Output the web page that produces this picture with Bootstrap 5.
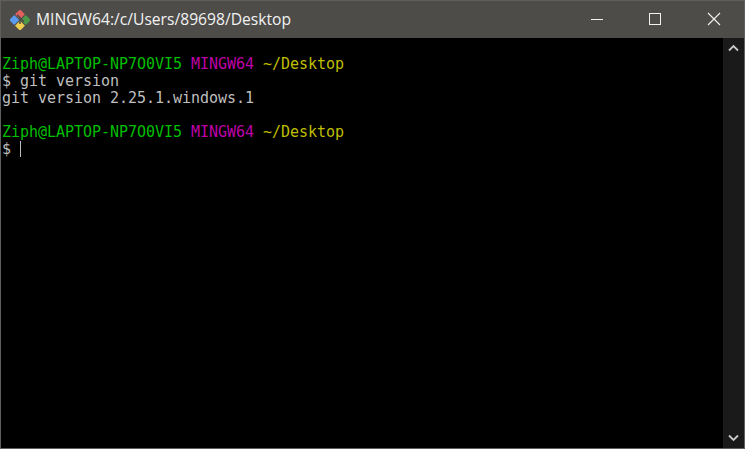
<!DOCTYPE html>
<html lang="en">
<head>
<meta charset="utf-8">
<title>MINGW64</title>
<link href="https://cdn.jsdelivr.net/npm/bootstrap@5.3.0/dist/css/bootstrap.min.css" rel="stylesheet">
<style>
html, body { height: 100%; margin: 0; background: #000; overflow: hidden; }
.term-window { height: 449px; border: 1px solid #5f5f5d; background: #000; }
.term-title { height: 37px; background: #4d4c49; color: #f2f2f2; font: 15.65px/1 "Open Sans", sans-serif; }
.term-logo { margin-left: 9px; margin-right: 6px; }
.term-controls { margin-right: 1px; }
.term-ctl { width: 58.5px; height: 37px; padding-bottom: 2px; }
.term-body { min-height: 0; }
.term-text { font: 15px/17px "DejaVu Sans Mono", monospace; letter-spacing: -0.03px; color: #bfbfbf; padding: 1px 0 0 1px; margin: 0; white-space: pre; overflow: hidden; }
.t-green { color: #00bf00; }
.t-mag { color: #bf00a8; }
.t-yel { color: #bfbf00; }
.term-cursor { display: inline-block; width: 1px; height: 16px; background: #bfbfbf; vertical-align: -3px; }
.term-scroll { width: 21px; background: #1a1a1a; padding: 6px 0; }
</style>
</head>
<body>
<div class="term-window d-flex flex-column">
  <div class="term-title d-flex align-items-center flex-shrink-0">
    <svg class="term-logo" width="20" height="20" viewBox="0 0 18 18">
      <g transform="rotate(45 9 9)">
        <rect x="2.2" y="2.2" width="6.3" height="6.3" fill="#e0605f"/>
        <rect x="9.5" y="2.2" width="6.3" height="6.3" fill="#4c9a4a"/>
        <rect x="2.2" y="9.5" width="6.3" height="6.3" fill="#5b9bf0"/>
        <rect x="9.5" y="9.5" width="6.3" height="6.3" fill="#f0cf50"/>
      </g>
      <path d="M6.5 4.5 L12.5 10.5" stroke="#4d4c49" stroke-width="1.4" fill="none"/>
      <path d="M9 7.5V12.5" stroke="#4d4c49" stroke-width="1.4" fill="none"/>
    </svg>
    <span class="flex-grow-1">MINGW64:/c/Users/89698/Desktop</span>
    <div class="term-controls d-flex">
      <div class="term-ctl d-flex align-items-center justify-content-center">
        <svg width="14" height="14" viewBox="0 0 14 14"><path d="M1 7.5H13" stroke="#f2f2f2" stroke-width="1"/></svg>
      </div>
      <div class="term-ctl d-flex align-items-center justify-content-center">
        <svg width="14" height="14" viewBox="0 0 14 14"><rect x="1.5" y="1.5" width="11" height="11" fill="none" stroke="#f2f2f2" stroke-width="1"/></svg>
      </div>
      <div class="term-ctl d-flex align-items-center justify-content-center">
        <svg width="14" height="14" viewBox="0 0 14 14"><path d="M1 1L13 13M13 1L1 13" stroke="#f2f2f2" stroke-width="1.1"/></svg>
      </div>
    </div>
  </div>
  <div class="term-body d-flex flex-grow-1">
    <pre class="term-text flex-grow-1">

<span class="t-green">Ziph@LAPTOP-NP7O0VI5</span> <span class="t-mag">MINGW64</span> <span class="t-yel">~/Desktop</span>
$ git version
git version 2.25.1.windows.1

<span class="t-green">Ziph@LAPTOP-NP7O0VI5</span> <span class="t-mag">MINGW64</span> <span class="t-yel">~/Desktop</span>
$ <span class="term-cursor"></span></pre>
    <div class="term-scroll d-flex flex-column justify-content-between align-items-center flex-shrink-0">
      <svg width="11" height="8" viewBox="0 0 11 8"><path d="M1 6.5L5.5 2L10 6.5" fill="none" stroke="#c8c8c8" stroke-width="1.8"/></svg>
      <svg width="11" height="8" viewBox="0 0 11 8"><path d="M1 1.5L5.5 6L10 1.5" fill="none" stroke="#c8c8c8" stroke-width="1.8"/></svg>
    </div>
  </div>
</div>
<script src="https://cdn.jsdelivr.net/npm/bootstrap@5.3.0/dist/js/bootstrap.bundle.min.js"></script>
</body>
</html>
